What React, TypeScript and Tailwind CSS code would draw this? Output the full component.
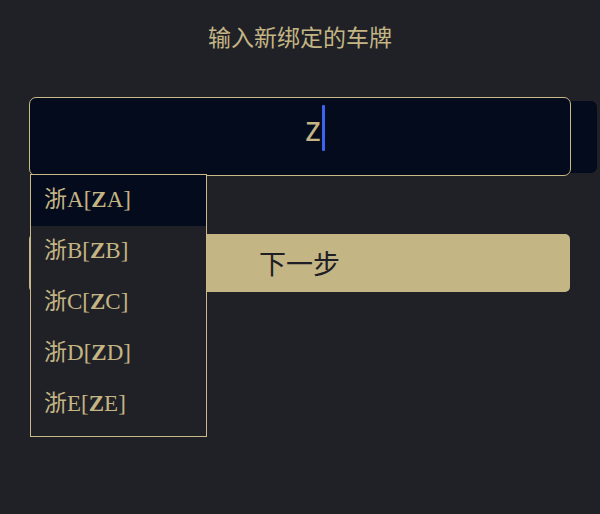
import React from "react";

const gold = "text-[#c4b585]";

export default function App() {
  const items = ["A", "B", "C", "D", "E"];
  return (
    <div className="min-h-screen w-full bg-[#202126] overflow-hidden" style={{ height: 514 }}>
      <div
        className={`pt-[20px] text-center text-[23px] leading-[32px] ${gold}`}
        style={{ fontFamily: '"Noto Sans CJK SC", "Noto Sans", sans-serif' }}
      >
        输入新绑定的车牌
      </div>

      <div className="relative mx-[29px] mt-[45px] h-[79px]">
        <div className="absolute right-[-26px] top-[4px] bottom-[3px] w-[60px] rounded-[6px] bg-[#040b1c]" />
        <div className="relative flex h-full items-start justify-center rounded-[7px] border border-[#c8b987] bg-[#040b1c] pl-[30px] pt-[7px]">
          <span
            className={`text-[34px] leading-[46px] ${gold}`}
            style={{ fontFamily: '"Noto Sans", sans-serif' }}
          >
            z
          </span>
          <span className="ml-[1px] h-[46px] w-[3px] rounded-[1px] bg-[#3a63f2]" />
        </div>

        <div
          className="absolute left-[1px] top-[77px] z-10 h-[263px] w-[177px] border border-[#c8b987] bg-[#202126]"
          style={{ fontFamily: '"Liberation Serif", "Noto Sans CJK SC", serif' }}
        >
          {items.map((l, i) => (
            <div
              key={l}
              className={`flex h-[51px] items-center px-[13px] text-[23px] ${gold} ${i === 0 ? "bg-[#040b1c]" : ""}`}
            >
              浙{l}[<b>Z</b>{l}]
            </div>
          ))}
        </div>
      </div>

      <div
        className="ml-[29px] mr-[30px] mt-[58px] flex h-[58px] items-center justify-center rounded-[5px] bg-[#c4b585] text-[27px] text-[#1f2025]"
        style={{ fontFamily: '"Noto Sans CJK SC", "Noto Sans", sans-serif' }}
      >
        下一步
      </div>
    </div>
  );
}
